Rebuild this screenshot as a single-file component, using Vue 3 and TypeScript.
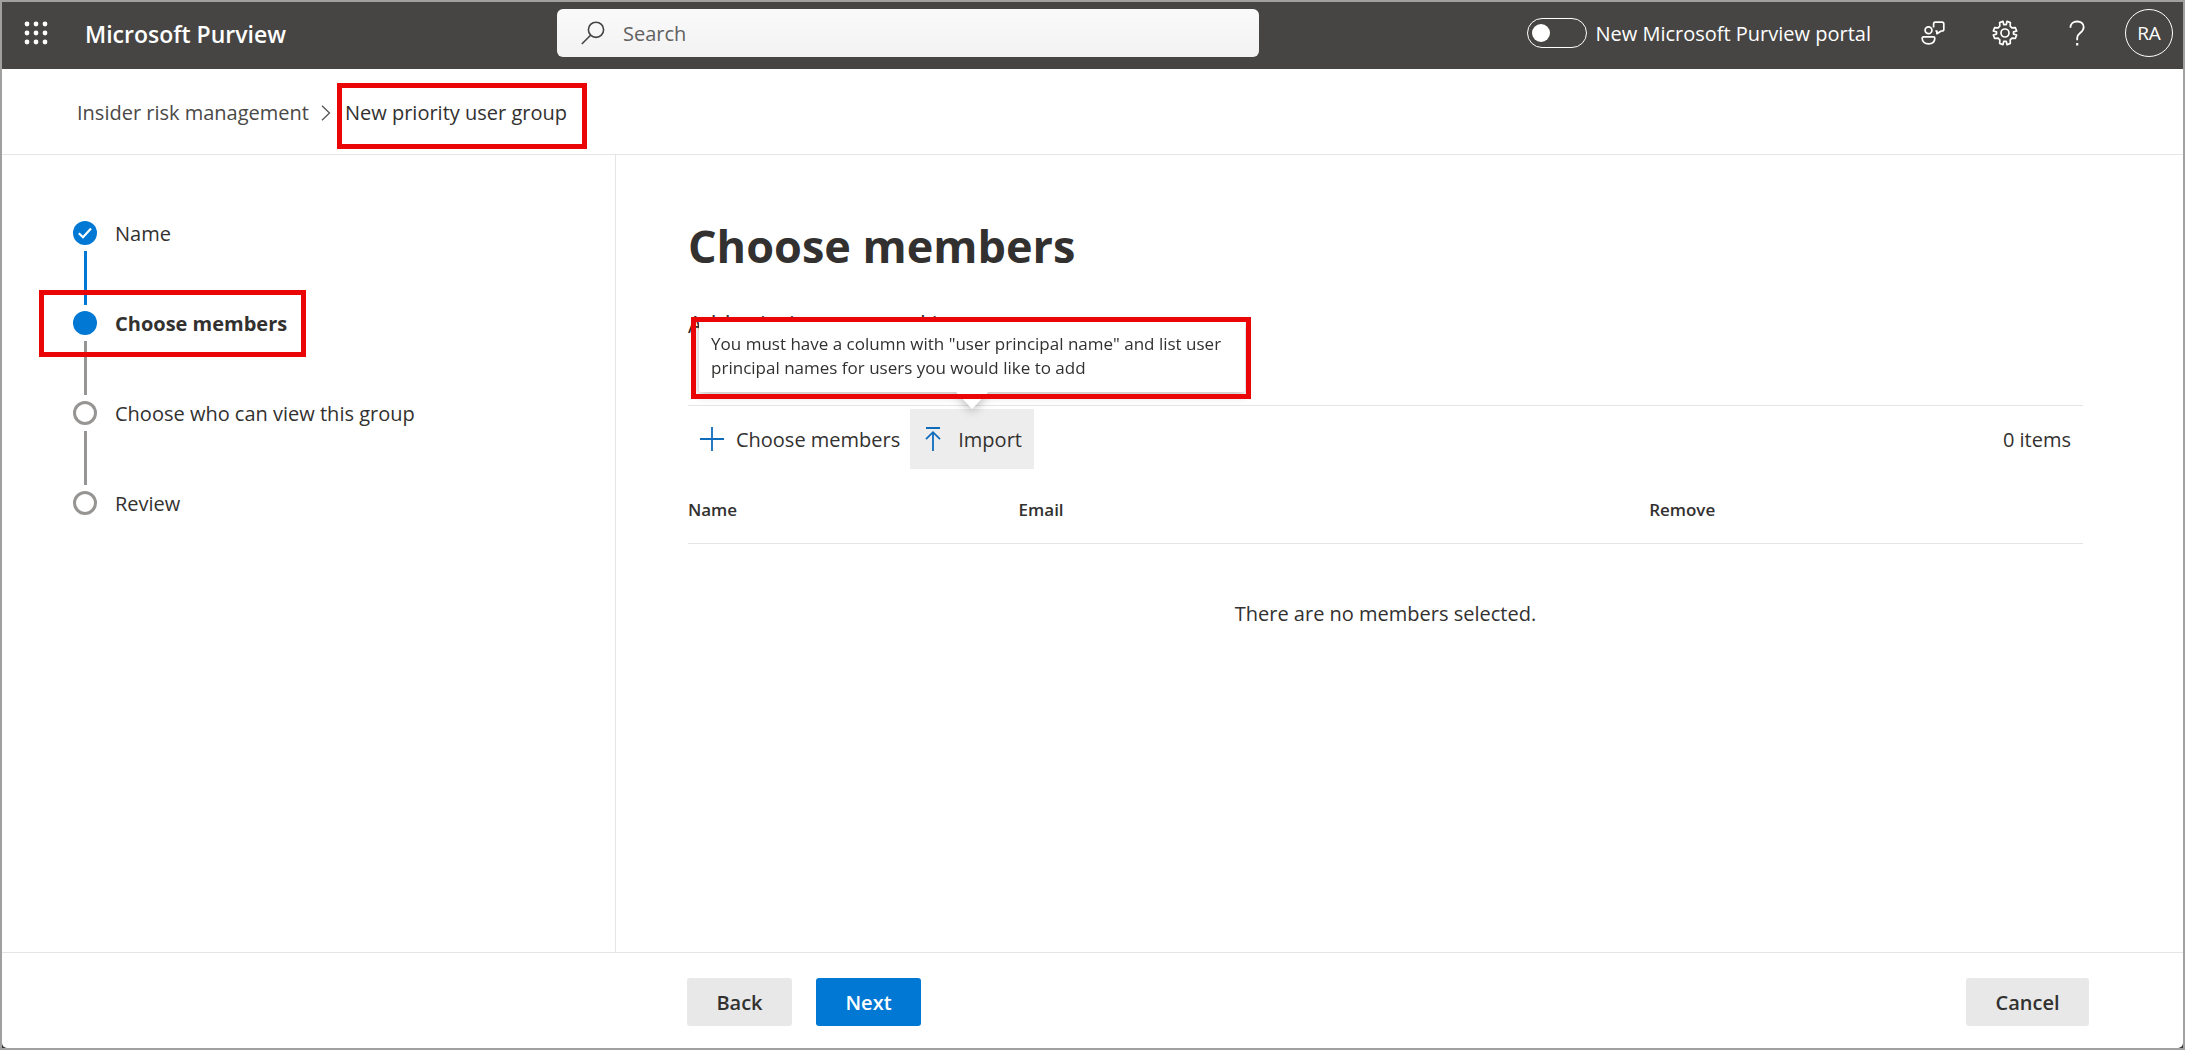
<script setup lang="ts">
import { ref } from 'vue'

type StepState = 'done' | 'current' | 'todo'

interface Step {
  label: string
  state: StepState
}

interface Member {
  name: string
  email: string
}

const steps: Step[] = [
  { label: 'Name', state: 'done' },
  { label: 'Choose members', state: 'current' },
  { label: 'Choose who can view this group', state: 'todo' },
  { label: 'Review', state: 'todo' },
]

const waffleDots = [0, 1, 2, 3, 4, 5, 6, 7, 8].map((n) => ({
  x: 3 + (n % 3) * 9,
  y: 3 + Math.floor(n / 3) * 9,
}))

const members = ref<Member[]>([])
const newPortal = ref(false)
const query = ref('')
</script>

<template>
  <div class="frame">
    <div class="portal">
      <header class="topbar">
        <div class="brand">
          <button class="icon-button" type="button" aria-label="App launcher">
            <svg width="24" height="24" viewBox="0 0 24 24" fill="#fff">
              <circle v-for="(d, i) in waffleDots" :key="i" :cx="d.x" :cy="d.y" r="2.4" />
            </svg>
          </button>
          <a class="brand-name label" href="#">Microsoft Purview</a>
        </div>

        <label class="search">
          <svg width="24" height="24" viewBox="0 0 24 24" fill="none" stroke="#444" stroke-width="1.6">
            <circle cx="15" cy="8.8" r="7.6" />
            <path d="M9.6 14.2 0.8 23" />
          </svg>
          <input v-model="query" class="label" type="text" placeholder="Search" aria-label="Search" />
        </label>

        <div class="tools">
          <label class="toggle">
            <input v-model="newPortal" type="checkbox" role="switch" />
            <span class="label">New Microsoft Purview portal</span>
          </label>
          <button class="icon-button" type="button" aria-label="Feedback">
            <svg width="24" height="24" viewBox="0 0 24 24" fill="none" stroke="#fff" stroke-width="1.7" stroke-linejoin="round">
              <circle cx="7.5" cy="9.3" r="3.4" />
              <path d="M2.6 15.8h9.8a1.4 1.4 0 0 1 1.4 1.4c0 3.8-2.6 5.6-6.3 5.6s-6.3-1.8-6.3-5.6a1.4 1.4 0 0 1 1.4-1.4Z" />
              <path d="M12.6 6.4V3a1.8 1.8 0 0 1 1.8-1.8H21A1.8 1.8 0 0 1 22.8 3v5.2A1.8 1.8 0 0 1 21 10h-.8l-4.3 2.7V10h-1.5" />
            </svg>
          </button>
          <button class="icon-button" type="button" aria-label="Settings">
            <svg width="26" height="26" viewBox="0 0 26 26" fill="none" stroke="#fff" stroke-width="1.7" stroke-linejoin="round">
              <circle cx="13" cy="13" r="4" />
              <path d="M14.3 4.7 15 1.3l3.3 1.3-.1 3.5 1.7 1.7 3.5-.1 1.3 3.3-3.2.9v2.2l3.2.9-1.3 3.3-3.5-.1-1.7 1.7.1 3.5-3.3 1.3-.7-3.4h-2.6L11 24.7l-3.3-1.3.1-3.5-1.7-1.7-3.5.1L1.3 15l3.2-.9v-2.2L1.3 11l1.3-3.3 3.5.1 1.7-1.7-.1-3.5L11 1.3l.7 3.4Z" />
            </svg>
          </button>
          <button class="icon-button" type="button" aria-label="Help">
            <svg width="24" height="26" viewBox="0 0 24 26" fill="none" stroke="#fff" stroke-width="1.8">
              <path d="M5.4 7.8C5.4 4 8.2 1.5 12.2 1.5c3.8 0 6.5 2.2 6.5 5.6 0 2.7-1.4 4.2-3.3 5.7-2 1.6-3.2 2.6-3.2 5v2.4" />
              <path d="M12.2 23v2.4" stroke-width="2.2" />
            </svg>
          </button>
          <button class="avatar" type="button" aria-label="Account">RA</button>
        </div>
      </header>

      <nav class="breadcrumb" aria-label="Breadcrumb">
        <a href="#">Insider risk management</a>
        <svg width="10" height="16" viewBox="0 0 10 16" fill="none" stroke="#555" stroke-width="1.3">
          <path d="M1 .8 8.5 8 1 15.2" />
        </svg>
        <span class="crumb-current">New priority user group</span>
      </nav>

      <div class="body">
        <aside class="side">
          <ol class="steps">
            <li v-for="step in steps" :key="step.label" class="step" :class="step.state">
              <span class="dot">
                <svg v-if="step.state === 'done'" width="24" height="24" viewBox="0 0 24 24" fill="none" stroke="#fff" stroke-width="2.2">
                  <path d="m5.8 12.2 4.2 4 8-8.6" />
                </svg>
              </span>
              <span class="step-label">{{ step.label }}</span>
            </li>
          </ol>
        </aside>

        <main class="content">
          <h1>Choose members</h1>
          <p class="intro">Add priority users and import</p>

          <div class="toolbar">
            <button class="command" type="button">
              <svg width="24" height="24" viewBox="0 0 24 24" fill="none" stroke="#0f6cbd" stroke-width="1.8">
                <path d="M12 0v24M0 12h24" />
              </svg>
              <span class="label">Choose members</span>
            </button>
            <div class="import">
              <button class="command active" type="button" aria-describedby="import-hint">
                <svg width="16" height="24" viewBox="0 0 16 24" fill="none" stroke="#0f6cbd" stroke-width="1.8">
                  <path d="M1 1h14M8 24V5M1 12.2 8 5.2l7 7" />
                </svg>
                <span class="label">Import</span>
              </button>
              <div id="import-hint" class="callout" role="tooltip">
                You must have a column with "user principal name" and list user principal names for users you would like to add
              </div>
            </div>
            <span class="count label">{{ members.length }} items</span>
          </div>

          <table class="members">
            <thead>
              <tr>
                <th class="col-name" scope="col">Name</th>
                <th class="col-email" scope="col">Email</th>
                <th scope="col">Remove</th>
              </tr>
            </thead>
            <tbody>
              <tr v-for="m in members" :key="m.email">
                <td>{{ m.name }}</td>
                <td>{{ m.email }}</td>
                <td><button type="button">Remove</button></td>
              </tr>
              <tr v-if="members.length === 0">
                <td class="empty" colspan="3">There are no members selected.</td>
              </tr>
            </tbody>
          </table>
        </main>
      </div>

      <footer class="footer">
        <button class="action" type="button"><span class="label">Back</span></button>
        <button class="action primary" type="button"><span class="label">Next</span></button>
        <button class="action cancel" type="button"><span class="label">Cancel</span></button>
      </footer>
    </div>
  </div>
</template>

<style>
body {
  margin: 0;
}
</style>

<style scoped>
*,
*::before,
*::after {
  box-sizing: border-box;
}

.frame {
  display: flex;
  min-height: 100vh;
  border: 2px solid #a0a0a0;
  background: #323130;
  color: #323130;
  font: 20px/28px 'Open Sans', 'Noto Sans', sans-serif;
}

.portal {
  display: flex;
  flex: 1;
  flex-direction: column;
  min-width: 0;
  border-radius: 0 0 5px 5px;
  background: #fff;
  overflow: hidden;
}

button,
input {
  font: inherit;
  color: inherit;
}

button {
  display: flex;
  align-items: center;
  justify-content: center;
  border: 0;
  padding: 0;
  background: none;
  cursor: pointer;
}

a {
  color: inherit;
  text-decoration: none;
}

svg {
  display: block;
  flex: none;
}

.label {
  padding-top: 2px;
}

/* Top bar */
.topbar {
  display: grid;
  grid-template-columns: 1fr 702px 1.665fr;
  align-items: center;
  height: 67px;
  padding-bottom: 5px;
  background: #464543;
  color: #fff;
}

.brand {
  display: flex;
  align-items: center;
}

.icon-button {
  width: 72px;
  height: 48px;
}

.brand .icon-button {
  width: 68px;
}

.brand-name {
  margin-left: 15px;
  font-size: 23px;
  font-weight: 600;
}

.search {
  display: flex;
  align-items: center;
  gap: 18px;
  height: 48px;
  padding: 0 24px;
  border-radius: 6px;
  background: linear-gradient(#fafafa, #f2f2f2);
}

.search input {
  flex: 1;
  min-width: 0;
  border: 0;
  padding: 2px 0 0;
  outline: 0;
  background: none;
  color: #616161;
}

.search input::placeholder {
  color: #616161;
  opacity: 1;
}

.tools {
  display: flex;
  align-items: center;
  justify-content: flex-end;
  padding-right: 10px;
}

.toggle {
  display: flex;
  align-items: center;
  gap: 8px;
  margin-right: 26px;
}

.toggle input {
  appearance: none;
  display: flex;
  align-items: center;
  width: 60px;
  height: 30px;
  margin: 0;
  padding: 0 4px;
  border: 1px solid #fff;
  border-radius: 15px;
}

.toggle input::before {
  content: '';
  width: 18px;
  height: 18px;
  border-radius: 50%;
  background: #fff;
}

.toggle input:checked {
  justify-content: flex-end;
}

.avatar {
  width: 48px;
  height: 48px;
  margin-left: 12px;
  border: 1px solid #fff;
  border-radius: 50%;
  font-size: 19px;
}

/* Breadcrumb */
.breadcrumb {
  display: flex;
  align-items: center;
  height: 86px;
  padding: 2px 0 0 75px;
  border-bottom: 1px solid #e5e5e5;
  color: #4a4947;
}

.breadcrumb svg {
  margin: 0 14px 0 12px;
}

.crumb-current {
  position: relative;
  color: #323130;
}

.crumb-current::after {
  content: '';
  position: absolute;
  inset: -16px -20px -22px -8px;
  border: 5px solid #ea0606;
}

/* Wizard steps */
.body {
  display: flex;
  flex: 1;
}

.side {
  flex: 0 0 28.15%;
  padding: 66px 0 0 36px;
  border-right: 1px solid #e5e5e5;
}

.steps {
  margin: 0;
  padding: 0;
  list-style: none;
}

.step {
  position: relative;
  display: flex;
  align-items: flex-start;
  gap: 18px;
  height: 90px;
  padding-left: 35px;
}

.step::before {
  content: '';
  position: absolute;
  left: 46px;
  top: 30px;
  width: 3px;
  height: 54px;
  background: #979593;
}

.step.done::before {
  background: #0078d4;
}

.step:last-child::before {
  display: none;
}

.step-label {
  line-height: 26px;
}

.dot {
  flex: none;
  width: 24px;
  height: 24px;
  border: 3px solid #979593;
  border-radius: 50%;
}

.done .dot,
.current .dot {
  border: 0;
  background: #0078d4;
}

.current .step-label {
  font-weight: 700;
}

.step.current::after {
  content: '';
  position: absolute;
  left: 1px;
  top: -21px;
  width: 267px;
  height: 67px;
  border: 5px solid #ea0606;
}

/* Main column */
.content {
  flex: 1;
  min-width: 0;
  padding: 61px 100px 40px 72px;
}

h1 {
  margin: 0;
  font-size: 45px;
  font-weight: 700;
  line-height: 60px;
}

.intro {
  margin: 32px 0 0;
  font-size: 23px;
  line-height: 32px;
}

.toolbar {
  display: flex;
  align-items: center;
  margin-top: 65px;
  padding-top: 3px;
  border-top: 1px solid #e5e5e5;
}

.command {
  gap: 12px;
  height: 60px;
  padding: 0 10px 0 12px;
}

.command.active {
  gap: 17px;
  padding: 0 12px 0 15px;
  background: #ededed;
}

.import {
  position: relative;
}

.callout {
  position: absolute;
  left: 50%;
  bottom: 100%;
  width: 546px;
  margin: 0 0 17px -273px;
  padding: 12px;
  border-radius: 2px;
  background: #fff;
  filter: drop-shadow(0 3px 5px rgba(0, 0, 0, 0.25));
  font-size: 17px;
  line-height: 24px;
}

.callout::before {
  content: '';
  position: absolute;
  left: 50%;
  bottom: -17px;
  width: 34px;
  height: 18px;
  margin-left: -17px;
  background: #fff;
  clip-path: polygon(0 0, 100% 0, 50% 100%);
}

.import::after {
  content: '';
  position: absolute;
  left: 50%;
  bottom: 100%;
  width: 560px;
  height: 82px;
  margin: 0 0 10px -281px;
  border: 5px solid #ea0606;
}

.count {
  margin-left: auto;
  padding-right: 12px;
}

.members {
  width: 100%;
  border-collapse: collapse;
  table-layout: fixed;
}

.members th {
  height: 74px;
  padding: 8px 0 0;
  border-bottom: 1px solid #e5e5e5;
  font-size: 17px;
  font-weight: 600;
  line-height: 24px;
  text-align: left;
}

.col-name {
  width: 23.7%;
}

.col-email {
  width: 45.2%;
}

.members .empty {
  padding: 56px 0 0;
  text-align: center;
}

/* Footer */
.footer {
  display: flex;
  align-items: flex-start;
  gap: 24px;
  height: 96px;
  padding: 25px 94px 0 685px;
  border-top: 1px solid #e5e5e5;
}

.action {
  min-width: 105px;
  height: 48px;
  border-radius: 3px;
  background: #e8e8e8;
  font-weight: 600;
}

.action.primary {
  background: #0078d4;
  color: #fff;
}

.action.cancel {
  min-width: 123px;
  margin-left: auto;
}
</style>
